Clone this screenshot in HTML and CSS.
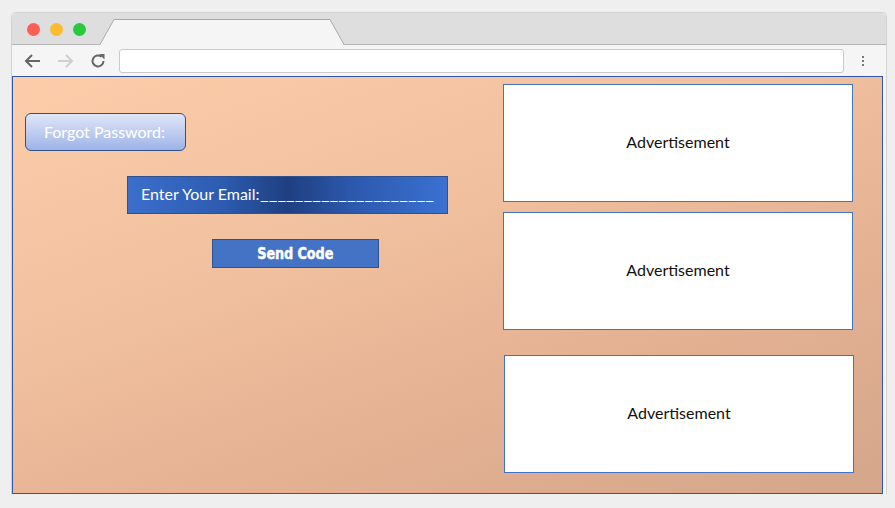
FILE: index.html
```html
<!DOCTYPE html>
<html>
<head>
<meta charset="utf-8">
<link rel="stylesheet" href="styles.css">
</head>
<body>
<div class="window">
  <div class="titlebar">
    <div class="lights">
      <span class="light red"></span>
      <span class="light yellow"></span>
      <span class="light green"></span>
    </div>
    <svg class="tab" width="248" height="26" viewBox="0 0 248 26">
      <path d="M0 25.5 L14 0.5 L230 0.5 L244 25.5" fill="#f5f5f5" stroke="#a9a9a9" stroke-width="1"/>
      <rect x="1" y="25" width="242" height="2" fill="#f5f5f5"/>
    </svg>
  </div>
  <div class="toolbar">
    <svg class="nav" width="18" height="16" viewBox="0 0 18 16"><path d="M16 8 H2 M8 2 L2 8 L8 14" fill="none" stroke="#666" stroke-width="2"/></svg>
    <svg class="nav" width="18" height="16" viewBox="0 0 18 16"><path d="M2 8 H16 M10 2 L16 8 L10 14" fill="none" stroke="#cfcfcf" stroke-width="2"/></svg>
    <svg class="nav" width="18" height="18" viewBox="0 0 18 18"><path d="M14.5 9 A5.5 5.5 0 1 1 12.6 4.8" fill="none" stroke="#666" stroke-width="2"/><path d="M10 2 L15.5 2 L15.5 7.5 Z" fill="#666"/></svg>
    <div class="address"></div>
    <div class="kebab"><span></span><span></span><span></span></div>
  </div>
  <div class="content">
    <div class="left">
      <div class="forgot">Forgot Password:</div>
      <div class="email">Enter Your Email:<span class="line">____________________</span></div>
      <div class="send"><span>Send Code</span></div>
    </div>
    <div class="right">
      <div class="ad">Advertisement</div>
      <div class="ad ad2">Advertisement</div>
      <div class="ad ad3">Advertisement</div>
    </div>
  </div>
</div>
</body>
</html>
```
FILE: styles.css
```css
html, body { margin: 0; padding: 0; }
body {
  background: #efefef;
  width: 895px;
  height: 508px;
  overflow: hidden;
  font-family: Lato, "Open Sans", sans-serif;
}
.window {
  margin: 12px 0 0 11px;
  width: 874px;
  border: 1px solid #d2d2d2;
  border-bottom: none;
  border-radius: 5px 5px 0 0;
  background: #f5f5f5;
}
.titlebar {
  height: 31px;
  background: #dedede;
  border-radius: 5px 5px 0 0;
  display: flex;
  align-items: flex-end;
  border-bottom: 1px solid #b5b5b5;
}
.lights {
  display: flex;
  gap: 10px;
  align-self: center;
  margin-left: 15px;
  margin-top: 1px;
}
.light { width: 13px; height: 13px; border-radius: 50%; display: block; }
.red { background: #fc5f57; }
.yellow { background: #fdbb2e; }
.green { background: #29c840; }
.tab {
  display: block;
  margin-left: 14px;
  margin-bottom: -1px;
}
.toolbar {
  height: 31px;
  display: flex;
  align-items: center;
  padding-left: 12px;
  background: #f5f5f5;
}
.nav { display: block; margin-right: 14px; }
.toolbar .nav:nth-child(2) { margin-right: 15px; }
.toolbar .nav:nth-child(3) { margin-right: 12px; }
.address {
  width: 723px;
  height: 22px;
  background: #fff;
  border: 1px solid #cacaca;
  border-radius: 3px;
}
.kebab {
  display: flex;
  flex-direction: column;
  gap: 2px;
  margin-left: 18px;
}
.kebab span { width: 2px; height: 2px; background: #777; display: block; }
.content {
  height: 416px;
  width: 869px;
  border: 1px solid #2f56a8;
  background: linear-gradient(160deg, #fdcca9 0%, #f0bf9d 40%, #e3b092 70%, #d4a68a 100%);
  display: flex;
}
.left {
  width: 490px;
}
.forgot {
  margin: 36px 0 0 12px;
  border: 1px solid #2f528f;
  border-radius: 6px;
  background: linear-gradient(to bottom, #dfe6f7 0%, #c0cdf0 50%, #9db2e7 100%);
  color: #fff;
  font-size: 16px;
  display: flex;
  align-items: center;
  justify-content: center;
  padding-bottom: 2px;
  padding-right: 2px;
  box-sizing: border-box;
  height: 38px;
  width: 161px;
}
.email {
  margin: 25px 0 0 114px;
  width: 321px;
  height: 38px;
  box-sizing: border-box;
  border: 1px solid #2f528f;
  background: linear-gradient(to right, #3b6fcc 0%, #2d5bb0 30%, #1f3f80 50%, #2c58ac 70%, #3a71d2 100%);
  color: #fff;
  font-size: 16px;
  padding-left: 13px;
  padding-bottom: 3px;
  display: flex;
  align-items: center;
  white-space: nowrap;
  overflow: hidden;
}
.line {
  display: inline-block;
  transform: scaleX(1.185);
  transform-origin: left center;
}
.send {
  margin: 25px 0 0 199px;
  width: 167px;
  height: 29px;
  box-sizing: border-box;
  border: 1px solid #2f528f;
  background: #4472c4;
  color: #fff;
  font-family: "DejaVu Sans", sans-serif;
  font-stretch: condensed;
  font-weight: bold;
  font-size: 14px;
  display: flex;
  align-items: center;
  justify-content: center;
  padding-bottom: 1px;
}
.send span {
  display: inline-block;
  transform: scale(1.02, 1.15);
  letter-spacing: -0.1px;
  -webkit-text-stroke: 0.4px #fff;
}
.right {
  display: flex;
  flex-direction: column;
  padding-top: 7px;
}
.ad {
  width: 348px;
  height: 67px;
  padding-top: 49px;
  background: #fff;
  border: 1px solid #4472c4;
  text-align: center;
  font-size: 16px;
  line-height: 1;
  color: #111;
}
.ad2 { margin-top: 10px; }
.ad3 { margin-top: 25px; margin-left: 1px; }
```
